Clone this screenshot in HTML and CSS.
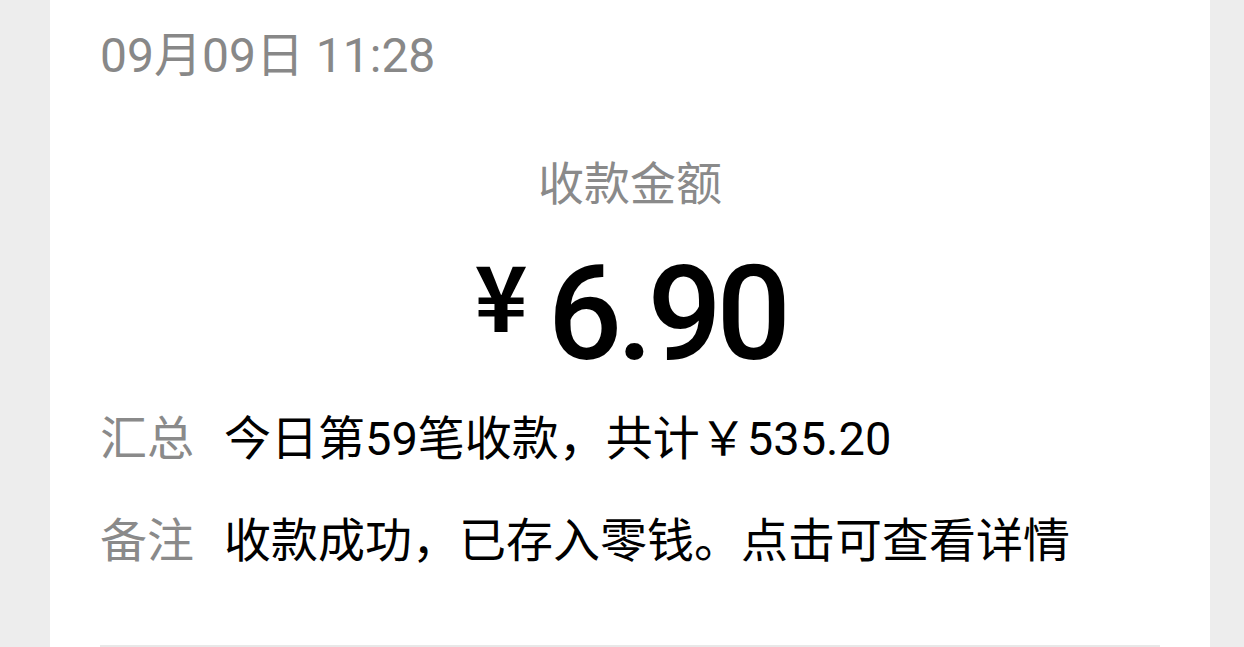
FILE: index.html
```html
<!DOCTYPE html>
<html lang="zh-CN">
<head>
<meta charset="utf-8">
<title>收款通知</title>
<link rel="stylesheet" href="styles.css">
</head>
<body>
<div class="page">
  <div class="card">
    <div class="time">09月09日 11:28</div>
    <div class="title">收款金额</div>
    <div class="amount"><span class="yen">¥</span><span class="num">6.90</span></div>
    <div class="rows">
      <div class="row"><span class="label">汇总</span><span class="value">今日第59笔收款，共计￥535.20</span></div>
      <div class="row"><span class="label">备注</span><span class="value">收款成功，已存入零钱。点击可查看详情</span></div>
    </div>
    <div class="divider"></div>
  </div>
</div>
</body>
</html>
```
FILE: styles.css
```css
html, body {
  margin: 0;
  padding: 0;
  background: #ededed;
  overflow: hidden;
}
.page {
  width: 1244px;
  height: 647px;
  padding-left: 50px;
  box-sizing: border-box;
}
.card {
  width: 1160px;
  height: 647px;
  background: #ffffff;
  padding-top: 28px;
  box-sizing: border-box;
  font-family: Roboto, "Noto Sans CJK SC", sans-serif;
  font-weight: 400;
}
.time {
  padding-left: 50px;
  font-size: 48px;
  line-height: 56px;
  color: #888888;
}
.title {
  margin-top: 68px;
  text-align: center;
  font-family: "Noto Sans CJK SC", sans-serif;
  font-size: 46px;
  line-height: 56px;
  color: #8a8a8a;
}
.amount {
  margin-top: 41px;
  display: flex;
  justify-content: center;
  align-items: flex-start;
  height: 130px;
  color: #000;
}
.yen {
  font-family: "Noto Sans CJK SC", sans-serif;
  font-weight: 700;
  font-size: 90px;
  line-height: 88px;
  margin-right: 20px;
}
.num {
  font-family: Roboto, "Noto Sans", sans-serif;
  font-weight: 500;
  font-size: 131px;
  line-height: 130px;
  letter-spacing: -5.5px;
}
.rows {
  margin-top: 9px;
  padding-left: 50px;
}
.row {
  display: flex;
  height: 102px;
  line-height: 102px;
  font-size: 47px;
}
.label {
  width: 124px;
  flex: none;
  color: #8a8a8a;
}
.value {
  color: #000;
}
.divider {
  margin: 53px 50px 0 50px;
  height: 2px;
  background: #e8e8e8;
}
```
